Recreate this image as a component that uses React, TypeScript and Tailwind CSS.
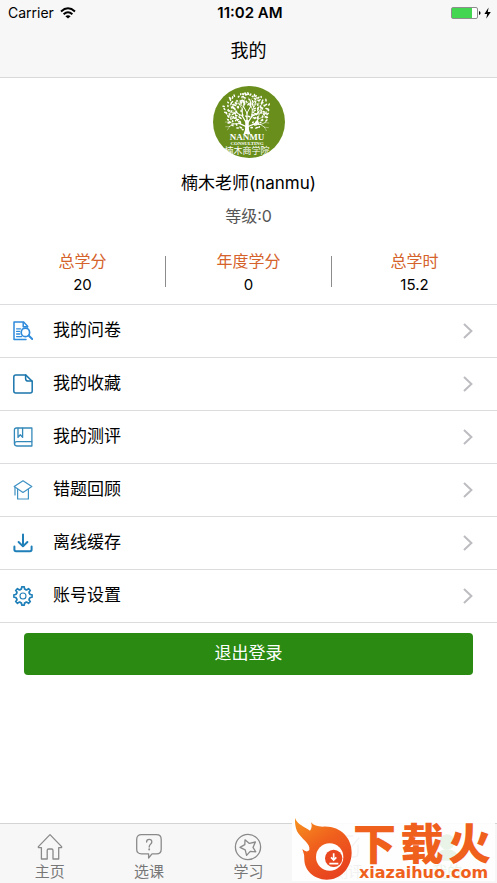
import type { ReactNode } from "react";
import { clsx } from "clsx";

const stats = [
  { label: "总学分", value: "20" },
  { label: "年度学分", value: "0" },
  { label: "总学时", value: "15.2" },
];

const menuItems = [
  { label: "我的问卷", href: "#survey", icon: <SurveyIcon /> },
  { label: "我的收藏", href: "#favorites", icon: <FavoriteIcon /> },
  { label: "我的测评", href: "#assessment", icon: <BookIcon /> },
  { label: "错题回顾", href: "#review", icon: <ReviewIcon /> },
  { label: "离线缓存", href: "#offline", icon: <DownloadIcon /> },
  { label: "账号设置", href: "#account", icon: <GearIcon /> },
];

const tabs = [
  { label: "主页", href: "#home", icon: <HomeIcon /> },
  { label: "选课", href: "#courses", icon: <CourseIcon /> },
  { label: "学习", href: "#study", icon: <StudyIcon /> },
  { label: "测评", href: "#exam", icon: <ExamIcon /> },
  { label: "我的", href: "#mine", icon: <MineIcon />, active: true },
];

function MenuSvg({ children }: { children: ReactNode }) {
  return (
    <svg
      viewBox="0 0 20 20"
      className="size-5 shrink-0"
      fill="none"
      stroke="#1f7fb8"
      strokeWidth="1.5"
      strokeLinecap="round"
      strokeLinejoin="round"
      aria-hidden="true"
    >
      {children}
    </svg>
  );
}

function SurveyIcon() {
  return (
    <MenuSvg>
      <g stroke="#2f8bdc">
        <path d="M14.6 6V5.2L10.6 1H1v17.4h12" />
        <path d="M10.2 1.4v4.4h4.2" />
        <path d="M3.6 7.8h4M3.6 10.4h3M3.6 13h3M3.6 15.6h5" strokeWidth="1.3" />
        <circle cx="12.4" cy="11.4" r="4.2" strokeWidth="1.7" />
        <path d="M15.6 14.6l3.6 3.4" strokeWidth="2" />
      </g>
    </MenuSvg>
  );
}

function FavoriteIcon() {
  return (
    <MenuSvg>
      <path d="M12.6 0.9H2.8Q0.8 0.9 0.8 2.9v14.2q0 2 2 2h14.4q2 0 2-2V7.2z" stroke="#1b76ad" />
      <path d="M12.6 1v3.4q0 2.6 2.6 2.6h3.8" stroke="#1b76ad" />
    </MenuSvg>
  );
}

function BookIcon() {
  return (
    <MenuSvg>
      <g strokeWidth="1.3" stroke="#3489bb">
        <path d="M18.9 1H3.4Q1.4 1 1.4 3v13.6q0 2.4 2.4 2.4h15.1z" />
        <path d="M1.6 16.6q.2-2 2.2-2h15" />
        <path d="M5 1.2v9.2l2.3-2.6 2.3 2.6V1.2" />
      </g>
    </MenuSvg>
  );
}

function ReviewIcon() {
  return (
    <MenuSvg>
      <g strokeWidth="1.2" stroke="#3f92c4">
        <path d="M10 .8L18.8 6.6 10 12.4 1.2 6.6z" />
        <path d="M4.6 9v10h10.8V9" />
        <path d="M2 7v8" />
      </g>
    </MenuSvg>
  );
}

function DownloadIcon() {
  return (
    <MenuSvg>
      <g strokeWidth="2">
        <path d="M10 1.6v11.6M5.6 9l4.4 4.4L14.4 9" />
        <path d="M1.4 13.6v3q0 1.6 1.6 1.6h14q1.6 0 1.6-1.6v-3" />
      </g>
    </MenuSvg>
  );
}

function GearIcon() {
  const teeth = [0, 45, 90, 135, 180, 225, 270, 315];
  return (
    <MenuSvg>
      {teeth.map((angle) => (
        <path
          key={angle}
          d="M7.2 3.6L8.5 3L8.7 .9H11.3L11.5 3L12.8 3.6"
          strokeWidth="1.6"
          transform={`rotate(${angle} 10 10)`}
        />
      ))}
      <circle cx="10" cy="10" r="3" strokeWidth="1.1" />
    </MenuSvg>
  );
}

function TabSvg({ children, active }: { children: ReactNode; active?: boolean }) {
  return (
    <svg
      viewBox="0 0 28 28"
      className="size-7"
      fill="none"
      stroke={active ? "#2a8a12" : "#8a8a8a"}
      strokeWidth="1.3"
      strokeLinejoin="round"
      strokeLinecap="round"
      aria-hidden="true"
    >
      {children}
    </svg>
  );
}

function HomeIcon() {
  return (
    <TabSvg>
      <path d="M14 1.6L25.6 13.6Q26 14.6 25 14.6H22.7V26H17V17.6Q17 16 15.6 16h-3Q11.2 16 11.2 17.6V26H5.4V14.6H3Q2 14.6 2.4 13.6z" />
    </TabSvg>
  );
}

function CourseIcon() {
  return (
    <TabSvg>
      <path d="M6.5 1.7h15Q26.2 1.7 26.2 6.4v9.8q0 4.6-4.7 4.6H17L13.6 25v-4.2H6.5q-4.8 0-4.8-4.6V6.4q0-4.7 4.8-4.7z" />
      <path d="M11.6 9q0-2.6 2.6-2.6T16.8 9q0 1.2-1.3 2.2T14.2 14" />
      <path d="M14.2 16.2v.3" strokeWidth="1.8" />
    </TabSvg>
  );
}

function StudyIcon() {
  return (
    <TabSvg>
      <circle cx="14" cy="14" r="12.6" />
      <path d="M11 6.8l4.4 3.6 6-1.4-2.4 5.4 2.8 4.4-5.6-.4-3.6 4-1.4-5.6-5.2-2.4 4.8-2.8z" />
    </TabSvg>
  );
}

function ExamIcon() {
  return (
    <TabSvg>
      <path d="M19 3H7Q3 3 3 7v13q0 4 4 4h13q4 0 4-4v-8" />
      <path d="M9 13l5 5L25 5" />
    </TabSvg>
  );
}

function MineIcon() {
  return (
    <TabSvg active>
      <g fill="#2a8a12">
        <circle cx="14" cy="9" r="7" />
        <path d="M2 27q2-10 12-10t12 10z" />
      </g>
    </TabSvg>
  );
}

type Branch = { x1: number; y1: number; x2: number; y2: number; width: number };

function growBranches(x: number, y: number, angle: number, length: number, depth: number, out: Branch[]) {
  const x2 = x + Math.cos(angle) * length;
  const y2 = y + Math.sin(angle) * length;
  out.push({ x1: x, y1: y, x2, y2, width: 0.4 + depth * 0.3 });
  if (depth === 0) return out;
  growBranches(x2, y2, angle - 0.5, length * 0.78, depth - 1, out);
  growBranches(x2, y2, angle + 0.5, length * 0.78, depth - 1, out);
  return out;
}

const branches = [
  ...growBranches(34, 41, -2.7, 8, 3, []),
  ...growBranches(34, 38, -2.1, 9, 3, []),
  ...growBranches(34, 36, -1.57, 9, 3, []),
  ...growBranches(34, 38, -1.0, 9, 3, []),
  ...growBranches(34, 41, -0.4, 8, 3, []),
];

// leaves follow a sunflower spiral, jittered so the crown looks natural
const leaves = Array.from({ length: 150 }, (_, i) => {
  const radius = Math.sqrt((i + 12) / 162);
  const angle = i * 2.4;
  return {
    x: 34 + Math.cos(angle) * radius * 23 + Math.sin(i * 12.9) * 1.3,
    y: 25 + Math.sin(angle) * radius * 19 + Math.cos(i * 7.7) * 1.3,
    rx: 1.2 + (i % 3) * 0.25,
    turn: (i * 67) % 180,
  };
}).filter((leaf) => leaf.y < 44 && !(Math.abs(leaf.x - 34) < 4 && leaf.y > 32));

function Avatar() {
  return (
    <svg viewBox="0 0 72 72" className="size-18" role="img" aria-label="楠木商学院">
      <circle cx="36" cy="36" r="36" fill="#698e1c" />
      <g stroke="#fff" strokeLinecap="round">
        {branches.map((b, i) => (
          <line key={i} x1={b.x1} y1={b.y1} x2={b.x2} y2={b.y2} strokeWidth={b.width} />
        ))}
      </g>
      <g fill="#fff">
        {leaves.map((leaf, i) => (
          <ellipse
            key={i}
            cx={leaf.x}
            cy={leaf.y}
            rx={leaf.rx}
            ry="0.8"
            transform={`rotate(${leaf.turn} ${leaf.x} ${leaf.y})`}
          />
        ))}
        <path d="M32.4 34h3.2l.4 10 1.4 4h-6.8l1.4-4z" />
      </g>
      <g fill="#fff" textAnchor="middle">
        <text x="34" y="54" fontSize="9" fontWeight="700" fontFamily="Liberation Serif, serif">
          NANMU
        </text>
        <text x="34" y="59" fontSize="5" fontWeight="700" fontFamily="Liberation Serif, serif">
          CONSULTING
        </text>
        <text x="34" y="68" fontSize="9" fontFamily="Noto Sans CJK SC, sans-serif">
          楠木商学院
        </text>
      </g>
    </svg>
  );
}

function StatusBar() {
  return (
    <div className="grid h-[26px] grid-cols-3 items-center pl-2 pr-[5px] text-sm">
      <div className="flex items-center gap-1.5">
        <span>Carrier</span>
        <svg viewBox="0 0 16 12" className="h-3 w-4" fill="none" stroke="#000" strokeWidth="2" aria-hidden="true">
          <path d="M1 4.4Q8-1.8 15 4.4M3.6 7.2q4.4-3.8 8.8 0" />
          <path d="M8 11.6L5.4 9.2q2.6-2 5.2 0z" fill="#000" stroke="none" />
        </svg>
      </div>
      <span className="text-center text-[15px] font-semibold">11:02 AM</span>
      <svg viewBox="0 0 42 14" className="h-3.5 w-[42px] justify-self-end" aria-hidden="true">
        <rect x="1.5" y="1.5" width="26" height="11" rx="1.5" fill="#fff" stroke="#8e8e8e" />
        <rect x="2" y="2" width="20" height="10" fill="#43d651" />
        <path d="M29 5q1.6.6 1.6 2T29 9z" fill="#111" />
        <path d="M38.6 1.4L34.4 8h2.8l-1 4.8L40.8 6h-3z" fill="#000" />
      </svg>
    </div>
  );
}

function Watermark() {
  return (
    <div className="absolute bottom-0.5 right-0.5 flex h-[63px] w-[203px] bg-white/90 text-[#f0601d]">
      <svg viewBox="6 12 183 189" className="h-[63px] w-[61px] shrink-0" aria-hidden="true">
        <defs>
          <linearGradient id="flame" x1="0" y1="0" x2="0.6" y2="1">
            <stop offset="0" stopColor="#f7931e" />
            <stop offset="0.5" stopColor="#f0601d" />
            <stop offset="1" stopColor="#e8431f" />
          </linearGradient>
        </defs>
        <path
          d="M15 12C22 32 44 38 60 50Q68 40 63 25Q74 38 98 38C150 34 186 72 185 116C184 164 150 197 110 197C70 196 44 168 43 138Q44 122 37 105Q50 118 58 108C62 88 34 76 21 52Q14 36 15 12z"
          fill="url(#flame)"
        />
        <circle cx="119" cy="129" r="41" fill="#fff" />
        <circle cx="131" cy="133" r="26" fill="#e8471f" />
        <path d="M131 118v18M123 130l8 8 8-8M118 149h27" stroke="#fff" strokeWidth="5" fill="none" />
      </svg>
      <div className="flex flex-1 flex-col justify-between pr-1">
        <div className="flex justify-between font-['Noto_Sans_CJK_SC',sans-serif] text-[43px] font-black leading-[46px]">
          <span>下</span>
          <span>载</span>
          <span>火</span>
        </div>
        <span className="pl-1.5 font-['DejaVu_Sans',sans-serif] text-base font-bold leading-4">
          xiazaihuo.com
        </span>
      </div>
    </div>
  );
}

export default function App() {
  return (
    <div className="relative flex min-h-screen flex-col bg-white font-[Inter,'Noto_Sans_CJK_SC',sans-serif] text-black">
      <header className="border-b border-[#d9d9d9] bg-[#f7f7f7]">
        <StatusBar />
        <h1 className="pb-0.5 text-center text-lg leading-[49px]">我的</h1>
      </header>

      <main className="flex-1">
        <section className="flex flex-col items-center border-b border-[#dcdcde] pb-[7px] pt-2">
          <Avatar />
          <h2 className="mt-[13px] text-[17px] leading-6">楠木老师(nanmu)</h2>
          <p className="mt-[9px] text-base leading-6 text-[#555]">等级:0</p>
          <dl className="mt-[21px] flex w-full items-center">
            {stats.map((stat, i) => (
              <div key={stat.label} className="contents">
                {i > 0 && <div className="mb-1 h-[31px] w-px bg-[#8c8c8c]" />}
                <div className="flex-1 text-center">
                  <dt className="text-base leading-6 text-[#d4622a]">{stat.label}</dt>
                  <dd className="text-[15px] leading-6">{stat.value}</dd>
                </div>
              </div>
            ))}
          </dl>
        </section>

        <nav>
          {menuItems.map((item) => (
            <a
              key={item.href}
              href={item.href}
              className="flex h-[53px] items-center gap-5 border-b border-[#dcdcde] pl-[13px] pr-6 text-[17px]"
            >
              {item.icon}
              <span className="flex-1">{item.label}</span>
              <svg viewBox="0 0 10 16" className="h-4 w-2.5" fill="none" stroke="#bcbcc1" strokeWidth="2" aria-hidden="true">
                <path d="M1 1l7.4 7L1 15" />
              </svg>
            </a>
          ))}
        </nav>

        <div className="px-6 pt-2.5">
          <button type="button" className="h-[42px] w-full rounded bg-[#2a8a12] text-[17px] text-white">
            退出登录
          </button>
        </div>
      </main>

      <footer className="grid h-[60px] grid-cols-5 border-t border-[#d4d4d4] bg-[#f7f7f7]">
        {tabs.map((tab) => (
          <a
            key={tab.href}
            href={tab.href}
            className={clsx(
              "flex flex-col items-center pt-[9px] text-[15px] leading-[22px]",
              tab.active ? "text-[#2a8a12]" : "text-[#777]"
            )}
          >
            {tab.icon}
            {tab.label}
          </a>
        ))}
      </footer>

      <Watermark />
    </div>
  );
}
